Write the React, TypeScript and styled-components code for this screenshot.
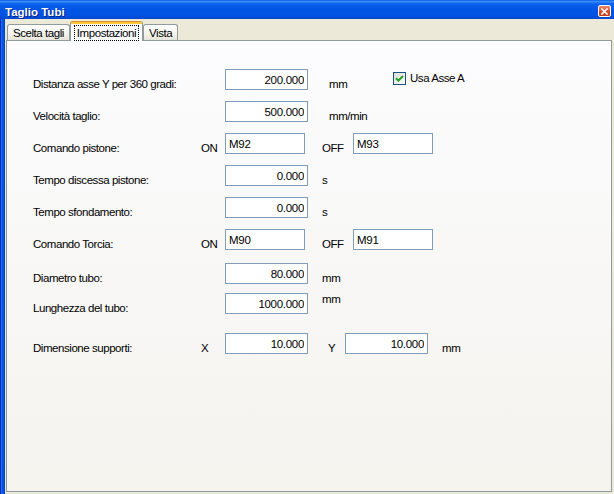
import React from 'react';
import styled, { createGlobalStyle } from 'styled-components';

const ui = `'Liberation Sans', Arial, sans-serif`;

const GlobalStyle = createGlobalStyle`
  html, body {
    margin: 0;
    padding: 0;
  }
  body {
    width: 614px;
    height: 494px;
    overflow: hidden;
    background: #ece9d8;
  }
`;

const Window = styled.div`
  width: 614px;
  height: 494px;
  display: flex;
  flex-direction: column;
  overflow: hidden;
`;

const TitleBar = styled.div`
  height: 19px;
  flex-shrink: 0;
  display: flex;
  align-items: flex-start;
  justify-content: space-between;
  padding: 0 3px 0 5px;
  background: linear-gradient(
    180deg,
    #0a5ce8 0%,
    #3b8cf5 8%,
    #0b62ee 20%,
    #0055e5 50%,
    #0052e2 80%,
    #0047cc 100%
  );
`;

const Title = styled.span`
  margin-top: 6px;
  line-height: 13px;
  color: #fff;
  font: bold 11.5px 'Liberation Sans', Arial, sans-serif;
  text-shadow: 1px 1px 0 #0a1e8c;
`;

const CloseButton = styled.div`
  margin-top: 5px;
  width: 13px;
  height: 12px;
  box-sizing: border-box;
  border: 1px solid #fff;
  border-radius: 2px;
  background: linear-gradient(180deg, #e9876a 0%, #d8502f 55%, #c23a1c 100%);
  display: flex;
  align-items: center;
  justify-content: center;
`;

const Frame = styled.div`
  flex: 1;
  display: flex;
  min-height: 0;
`;

const SideBorder = styled.div`
  width: 5px;
  flex-shrink: 0;
  background: linear-gradient(90deg, #0a2ab8 0 1px, #1e6cf2 1px 2px, #0055e5 2px 4px, #0044cc 4px 5px);
`;

const Client = styled.div`
  flex: 1;
  display: flex;
  flex-direction: column;
  padding: 2px 2px 2px 1px;
  background: #ece9d8;
`;

const TabStrip = styled.div`
  height: 19px;
  display: flex;
  align-items: flex-end;
  padding-left: 1px;
  position: relative;
  z-index: 1;
`;

const Tab = styled.div<{ $active?: boolean }>`
  box-sizing: border-box;
  height: ${(p) => (p.$active ? 20 : 16)}px;
  margin-bottom: ${(p) => (p.$active ? -1 : 0)}px;
  padding: ${(p) => (p.$active ? '3px 4px 0' : '0 5px')};
  border: 1px solid #919b9c;
  border-top: ${(p) => (p.$active ? 'none' : '1px solid #919b9c')};
  border-bottom: none;
  border-radius: 3px 3px 0 0;
  background: ${(p) =>
    p.$active
      ? 'linear-gradient(180deg, #e68b2c 0 1px, #ffc73c 1px 3px, #fcfcfe 3px)'
      : 'linear-gradient(180deg, #ffffff 0%, #f3f2ec 60%, #e6e4da 100%)'};
  font: 11.5px ${ui};
  letter-spacing: -0.45px;
  line-height: 14px;
  color: #000;
  display: flex;
  align-items: center;
  justify-content: center;
`;

const FocusRing = styled.span`
  outline: 1px dotted #000;
  outline-offset: 0;
  padding: 0 2px;
  line-height: 14px;
`;

const Panel = styled.div`
  flex: 1;
  border: 1px solid #919b9c;
  background: linear-gradient(180deg, #fcfcfe 0%, #f4f3ee 100%);
  padding: 28px 0 0 26px;
`;

const Row = styled.div<{ $gap: number }>`
  display: flex;
  align-items: flex-end;
  height: 21px;
  margin-top: ${(p) => p.$gap}px;
`;

const Text = styled.span`
  font: 11.5px ${ui};
  letter-spacing: -0.45px;
  line-height: 14px;
  color: #000;
  white-space: nowrap;
  margin-bottom: -1px;
`;

const Label = styled(Text)`
  width: 168px;
  flex-shrink: 0;
`;

const Prefix = styled(Text)<{ $w?: number; $left?: number }>`
  width: ${(p) => p.$w ?? 24}px;
  margin-left: ${(p) => p.$left ?? 0}px;
  flex-shrink: 0;
`;

const Unit = styled(Text)<{ $left: number; $w?: number; $top?: boolean }>`
  margin-left: ${(p) => p.$left}px;
  width: ${(p) => (p.$w ? `${p.$w}px` : 'auto')};
  flex-shrink: 0;
  align-self: ${(p) => (p.$top ? 'flex-start' : 'auto')};
  margin-top: ${(p) => (p.$top ? -1 : 0)}px;
`;

const Field = styled.input.attrs({ readOnly: true })<{ $w: number; $align?: 'left' | 'right' }>`
  box-sizing: border-box;
  width: ${(p) => p.$w}px;
  height: 21px;
  margin: 0;
  padding: 0 3px;
  border: 1px solid #7f9db9;
  background: #fff;
  color: #000;
  font: 11.5px ${ui};
  letter-spacing: -0.3px;
  text-align: ${(p) => p.$align ?? 'right'};
  outline: none;
  flex-shrink: 0;
`;

const CheckWrap = styled.div`
  align-self: flex-start;
  margin-top: 2px;
  display: flex;
  align-items: center;
  gap: 4px;
`;

const CheckBox = styled.div`
  box-sizing: border-box;
  width: 13px;
  height: 13px;
  border: 1px solid #1c5180;
  background: linear-gradient(135deg, #dcdcd7 0%, #ffffff 100%);
  display: flex;
  align-items: center;
  justify-content: center;
`;

const CheckText = styled(Text)`
  margin-bottom: 0;
`;

const App: React.FC = () => {
  return (
    <>
      <GlobalStyle />
      <Window>
        <TitleBar>
          <Title>Taglio Tubi</Title>
          <CloseButton>
            <svg width="7" height="7" viewBox="0 0 7 7">
              <path d="M1 1 L6 6 M6 1 L1 6" stroke="#fff" strokeWidth="1.6" strokeLinecap="square" />
            </svg>
          </CloseButton>
        </TitleBar>
        <Frame>
          <SideBorder />
          <Client>
            <TabStrip>
              <Tab>Scelta tagli</Tab>
              <Tab $active>
                <FocusRing>Impostazioni</FocusRing>
              </Tab>
              <Tab>Vista</Tab>
            </TabStrip>
            <Panel>
              <Row $gap={0}>
                <Label>Distanza asse Y per 360 gradi:</Label>
                <Prefix />
                <Field $w={83} value="200.000" />
                <Unit $left={21} $w={64}>mm</Unit>
                <CheckWrap>
                  <CheckBox>
                    <svg width="9" height="9" viewBox="0 0 9 9">
                      <path d="M1 4.2 L3.4 6.6 L8 2" fill="none" stroke="#21a121" strokeWidth="2" />
                    </svg>
                  </CheckBox>
                  <CheckText>Usa Asse A</CheckText>
                </CheckWrap>
              </Row>

              <Row $gap={11}>
                <Label>Velocità taglio:</Label>
                <Prefix />
                <Field $w={83} value="500.000" />
                <Unit $left={21}>mm/min</Unit>
              </Row>

              <Row $gap={11}>
                <Label>Comando pistone:</Label>
                <Prefix>ON</Prefix>
                <Field $w={80} $align="left" value="M92" />
                <Prefix $left={17} $w={31}>OFF</Prefix>
                <Field $w={80} $align="left" value="M93" />
              </Row>

              <Row $gap={11}>
                <Label>Tempo discessa pistone:</Label>
                <Prefix />
                <Field $w={83} value="0.000" />
                <Unit $left={14}>s</Unit>
              </Row>

              <Row $gap={11}>
                <Label>Tempo sfondamento:</Label>
                <Prefix />
                <Field $w={83} value="0.000" />
                <Unit $left={14}>s</Unit>
              </Row>

              <Row $gap={11}>
                <Label>Comando Torcia:</Label>
                <Prefix>ON</Prefix>
                <Field $w={80} $align="left" value="M90" />
                <Prefix $left={17} $w={31}>OFF</Prefix>
                <Field $w={80} $align="left" value="M91" />
              </Row>

              <Row $gap={13}>
                <Label>Diametro tubo:</Label>
                <Prefix />
                <Field $w={83} value="80.000" />
                <Unit $left={14}>mm</Unit>
              </Row>

              <Row $gap={9}>
                <Label>Lunghezza del tubo:</Label>
                <Prefix />
                <Field $w={83} value="1000.000" />
                <Unit $left={14} $top>mm</Unit>
              </Row>

              <Row $gap={19}>
                <Label>Dimensione supporti:</Label>
                <Prefix>X</Prefix>
                <Field $w={83} value="10.000" />
                <Prefix $left={20} $w={17}>Y</Prefix>
                <Field $w={83} value="10.000" />
                <Unit $left={14}>mm</Unit>
              </Row>
            </Panel>
          </Client>
        </Frame>
      </Window>
    </>
  );
};

export default App;
